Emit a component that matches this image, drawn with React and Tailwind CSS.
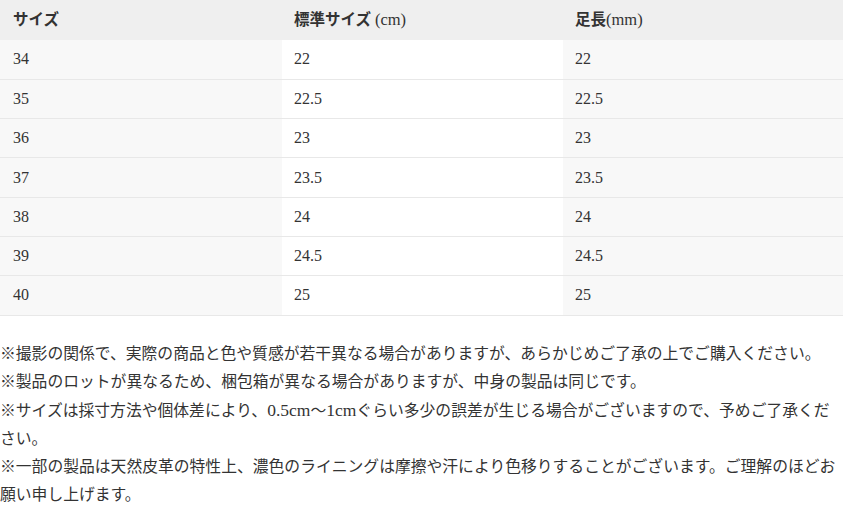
const rows = [
  ['34', '22', '22'],
  ['35', '22.5', '22.5'],
  ['36', '23', '23'],
  ['37', '23.5', '23.5'],
  ['38', '24', '24'],
  ['39', '24.5', '24.5'],
  ['40', '25', '25'],
]

export default function App() {
  return (
    <div
      className="w-[843px] h-[515px] bg-white text-[#333] overflow-hidden"
      style={{ fontFamily: '"Liberation Serif", "Noto Sans CJK JP", serif' }}
    >
      {/* サイズ表 */}
      <table className="w-full border-collapse text-[16px] table-fixed">
        <thead>
          <tr className="bg-[#efefef] h-[40px] text-[15.5px]">
            <th className="w-[282px] text-left font-bold pl-[13px]">サイズ</th>
            <th className="w-[281px] text-left font-bold pl-[12px]">
              標準サイズ <span className="font-normal text-[16.5px]">(cm)</span>
            </th>
            <th className="text-left font-bold pl-[12px]">
              足長<span className="font-normal text-[16.5px]">(mm)</span>
            </th>
          </tr>
        </thead>
        <tbody>
          {rows.map((r) => (
            <tr key={r[0]} className="h-[39.3px] border-b border-[#e8e8e8]">
              <td className="bg-[#f8f8f8] pl-[13px]">{r[0]}</td>
              <td className="bg-white pl-[12px]">{r[1]}</td>
              <td className="bg-[#f8f8f8] pl-[12px]">{r[2]}</td>
            </tr>
          ))}
        </tbody>
      </table>

      {/* 注意事項 */}
      <div className="mt-[24px] text-[15.8px] leading-[28px]">
        <p>※撮影の関係で、実際の商品と色や質感が若干異なる場合がありますが、あらかじめご了承の上でご購入ください。</p>
        <p>※製品のロットが異なるため、梱包箱が異なる場合がありますが、中身の製品は同じです。</p>
        <p>
          ※サイズは採寸方法や個体差により、<span className="text-[17.5px]">0.5cm</span>～
          <span className="text-[17.5px]">1cm</span>ぐらい多少の誤差が生じる場合がございますので、予めご了承ください。
        </p>
        <p>※一部の製品は天然皮革の特性上、濃色のライニングは摩擦や汗により色移りすることがございます。ご理解のほどお願い申し上げます。</p>
      </div>
    </div>
  )
}
